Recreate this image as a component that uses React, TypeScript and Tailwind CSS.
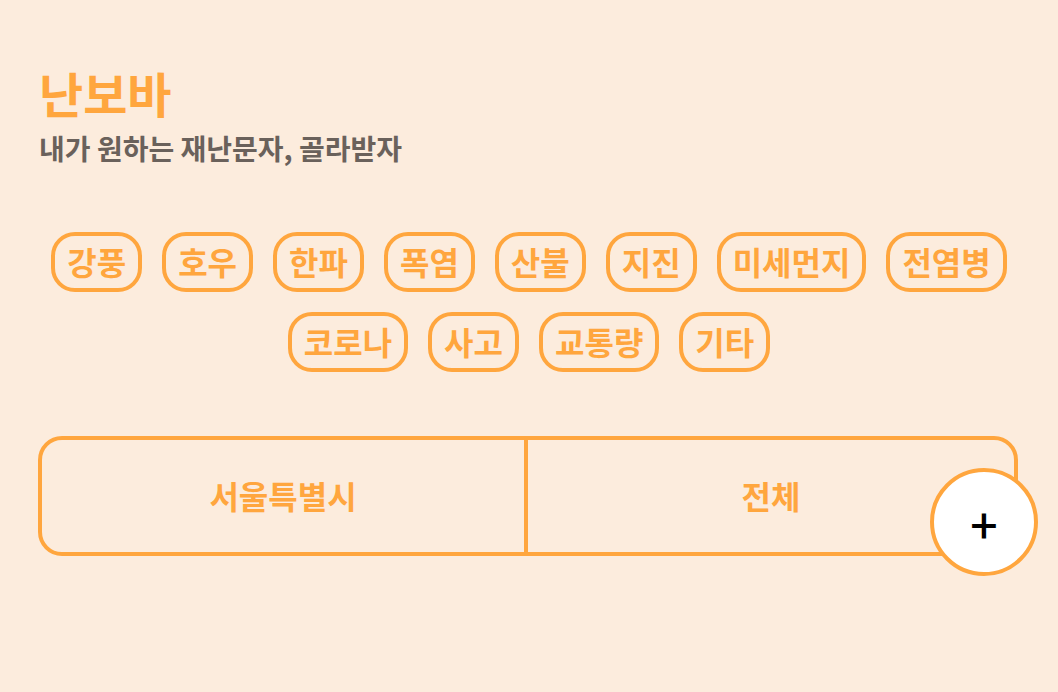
const topics = ['강풍', '호우', '한파', '폭염', '산불', '지진', '미세먼지', '전염병', '코로나', '사고', '교통량', '기타'];

export default function App() {
  return (
    <main className="min-h-screen bg-[#fcecdd] px-[38px] pt-[60px] font-['Noto_Sans_CJK_KR',sans-serif] text-[#ffa63e]">
      <header className="flex flex-col gap-1 pl-px">
        <h1 className="text-5xl leading-[64px] font-bold">난보바</h1>
        <p className="text-[28px] leading-[40px] font-bold text-[#6a615b]">내가 원하는 재난문자, 골라받자</p>
      </header>
      <section aria-label="재난 유형" className="mt-16 flex flex-wrap justify-center gap-5">
        {topics.map((topic) => (
          <button key={topic} type="button" className="h-[60px] rounded-3xl border-4 border-[#ffa63e] px-3 pb-0.5 text-[32px] leading-[48px] font-bold">
            {topic}
          </button>
        ))}
      </section>
      <section aria-label="지역" className="relative mt-16 mr-[2px] grid h-[120px] grid-cols-2 rounded-3xl border-4 border-[#ffa63e]">
        <button type="button" className="border-r-4 border-[#ffa63e] pb-0.5 text-[32px] font-bold">서울특별시</button>
        <button type="button" className="pb-0.5 text-[32px] font-bold">전체</button>
        <button type="button" aria-label="지역 추가" className="absolute top-7 -right-6 flex size-[108px] items-center justify-center rounded-full border-4 border-[#ffa63e] bg-white pt-0.5 text-black">
          <span className="text-5xl font-medium">+</span>
        </button>
      </section>
    </main>
  );
}
